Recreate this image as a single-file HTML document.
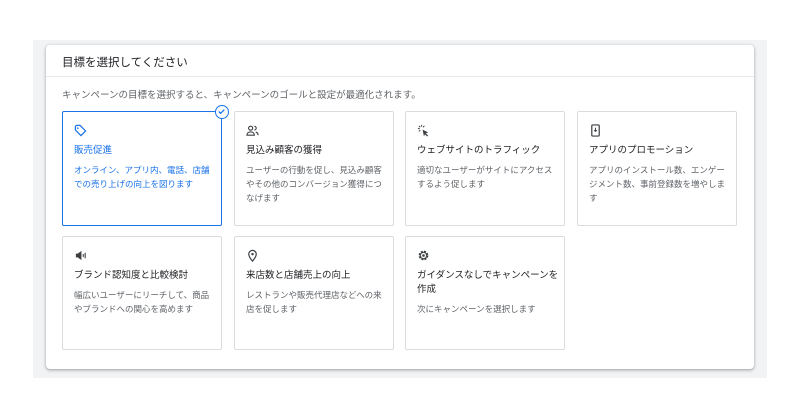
<!DOCTYPE html><html><head><meta charset="utf-8"><style>
body{margin:0;width:800px;height:418px;background:#fff;font-family:"Liberation Sans","Noto Sans CJK JP",sans-serif;position:relative;overflow:hidden}
.bg{position:absolute;left:33px;top:40px;width:734px;height:338px;background:#f1f3f4}
.card{position:absolute;left:46px;top:45px;width:708px;height:324px;background:#fff;border-radius:4px;box-shadow:0 1px 2px rgba(60,64,67,.3),0 1px 3px 1px rgba(60,64,67,.15)}
.hd{position:absolute;left:16px;top:9px;font-size:11.5px;color:#202124}
.line{position:absolute;left:0;right:0;top:31px;border-top:1px solid #e8eaed}
.sub{position:absolute;left:16px;top:42px;font-size:9.5px;color:#5f6368}
.o{position:absolute;width:160px;height:115px;border:1px solid #dadce0;border-radius:2px;box-sizing:border-box;padding:12px 5px 10px 11px}
.o svg{display:block;width:13px;height:13px;margin-bottom:7px}
.t{font-size:9.5px;color:#202124;line-height:14px;margin-bottom:5px}
.d{font-size:8.5px;color:#5f6368;line-height:14px}
.sel{border:1.5px solid #1a73e8}
.sel .t,.sel .d{color:#1a73e8}
.chk{position:absolute;left:152px;top:-7px;width:14px;height:14px;border-radius:50%;background:#fff;border:1.5px solid #1a73e8;box-sizing:border-box}
</style></head><body>
<div class="bg"></div>
<div class="card">
<div class="hd">目標を選択してください</div><div class="line"></div>
<div class="sub">キャンペーンの目標を選択すると、キャンペーンのゴールと設定が最適化されます。</div>

<div class="o sel" style="left:16px;top:66px"><div class="chk"><svg viewBox="0 0 12 12" style="width:11px;height:11px;margin:0"><path d="M3 6l2 2 4-4" stroke="#1a73e8" stroke-width="1.4" fill="none"/></svg></div>
<svg viewBox="0 0 14 14"><path d="M1.5 2.5v4l6 6 5-5-6-6h-4z" fill="none" stroke="#1a73e8" stroke-width="1.3"/><circle cx="4" cy="4.5" r=".9" fill="#1a73e8"/></svg>
<div class="t">販売促進</div><div class="d">オンライン、アプリ内、電話、店舗での売り上げの向上を図ります</div></div>

<div class="o" style="left:188px;top:66px"><svg viewBox="0 0 14 14"><circle cx="5" cy="4.5" r="2.2" fill="none" stroke="#3c4043" stroke-width="1.2"/><path d="M1 12c0-2.5 2-3.5 4-3.5s4 1 4 3.5zM9 2.5a2 2 0 010 4M10.5 8.7c1.5.5 2.5 1.5 2.5 3.3" fill="none" stroke="#3c4043" stroke-width="1.2"/></svg>
<div class="t">見込み顧客の獲得</div><div class="d">ユーザーの行動を促し、見込み顧客やその他のコンバージョン獲得につなげます</div></div>

<div class="o" style="left:359px;top:66px"><svg viewBox="0 0 14 14"><path d="M6 6l6 3-2.5 1 2.5 2.5-1 1L8.5 11l-1 2.5z" fill="#3c4043"/><path d="M5 1v2M1 5h2M2 2l1.5 1.5M8 2L6.5 3.5M2 8l1.5-1.5" stroke="#3c4043" stroke-width="1"/></svg>
<div class="t">ウェブサイトのトラフィック</div><div class="d">適切なユーザーがサイトにアクセスするよう促します</div></div>

<div class="o" style="left:531px;top:66px"><svg viewBox="0 0 14 14"><rect x="3" y="1" width="8" height="12" rx="1" fill="none" stroke="#3c4043" stroke-width="1.3"/><path d="M7 4v4M5.5 6.5L7 8l1.5-1.5" stroke="#3c4043" stroke-width="1" fill="none"/></svg>
<div class="t">アプリのプロモーション</div><div class="d">アプリのインストール数、エンゲージメント数、事前登録数を増やします</div></div>

<div class="o" style="left:16px;top:191px;height:114px"><svg viewBox="0 0 14 14"><path d="M2 5h2l4-3v10L4 9H2z" fill="#3c4043"/><path d="M10 5.5v3M12 4v6" stroke="#3c4043" stroke-width="1.2"/></svg>
<div class="t">ブランド認知度と比較検討</div><div class="d">幅広いユーザーにリーチして、商品やブランドへの関心を高めます</div></div>

<div class="o" style="left:188px;top:191px;height:114px"><svg viewBox="0 0 14 14"><path d="M7 13S3 8.5 3 5.5a4 4 0 018 0C11 8.5 7 13 7 13z" fill="none" stroke="#3c4043" stroke-width="1.3"/><circle cx="7" cy="5.5" r="1.3" fill="#3c4043"/></svg>
<div class="t">来店数と店舗売上の向上</div><div class="d">レストランや販売代理店などへの来店を促します</div></div>

<div class="o" style="left:359px;top:191px;height:114px"><svg viewBox="0 0 14 14"><circle cx="7" cy="7" r="4" fill="none" stroke="#3c4043" stroke-width="2.5" stroke-dasharray="2 1.2"/><circle cx="7" cy="7" r="3.5" fill="none" stroke="#3c4043" stroke-width="1"/><circle cx="7" cy="7" r="1.4" fill="#3c4043"/></svg>
<div class="t">ガイダンスなしでキャンペーンを作成</div><div class="d">次にキャンペーンを選択します</div></div>
</div>
</body></html>
